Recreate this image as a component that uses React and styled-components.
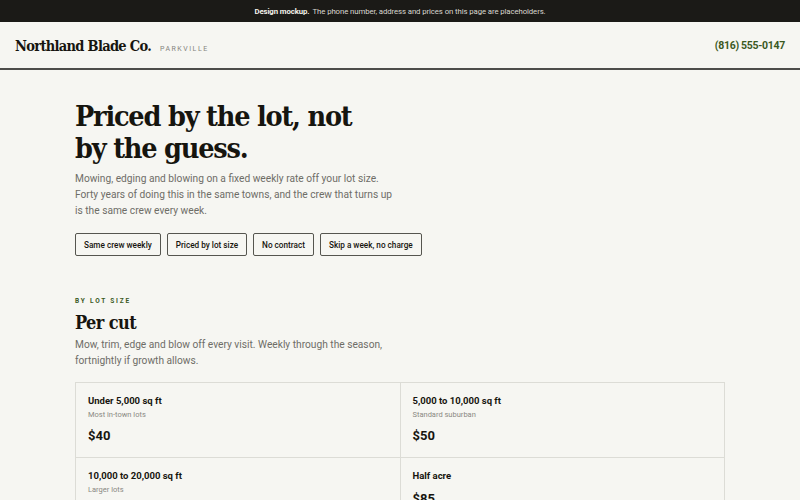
import React from 'react';
import styled, { createGlobalStyle } from 'styled-components';

const INK = '#16150f';
const PAPER = '#f6f6f2';
const MUTED = '#6e6d67';
const GREEN = '#3b5a1f';
const LINE = '#dcdcd6';

const SLAB = '"DejaVu Serif Condensed", "DejaVu Serif", serif';
const SANS = 'Roboto, "Liberation Sans", sans-serif';

const GlobalStyle = createGlobalStyle`
  html, body {
    margin: 0;
    padding: 0;
    background: ${PAPER};
    color: ${INK};
    font-family: ${SANS};
  }
  * {
    box-sizing: border-box;
  }
`;

const Notice = styled.div`
  height: 22px;
  background: #1b1a17;
  color: #d8d6cf;
  font-size: 7.8px;
  letter-spacing: -0.1px;
  display: flex;
  align-items: center;
  justify-content: center;

  strong {
    color: #f3f1ea;
    font-weight: 700;
    margin-right: 3px;
  }
`;

const Header = styled.header`
  height: 48px;
  display: flex;
  align-items: center;
  justify-content: space-between;
  padding: 0 15px;
  border-bottom: 2px solid #4d4d4a;
`;

const Brand = styled.div`
  display: flex;
  align-items: baseline;
  gap: 9px;
`;

const BrandName = styled.span`
  font-family: ${SLAB};
  font-size: 14.5px;
  font-weight: 700;
  letter-spacing: -0.7px;
`;

const Town = styled.span`
  font-size: 7px;
  letter-spacing: 1.5px;
  color: #85847e;
  text-transform: uppercase;
`;

const Phone = styled.a`
  color: ${GREEN};
  font-weight: 700;
  font-size: 10.5px;
  letter-spacing: -0.3px;
  text-decoration: none;
`;

const Main = styled.main`
  padding: 30px 75px 0;
  display: flex;
  flex-direction: column;
`;

const Headline = styled.h1`
  font-family: ${SLAB};
  font-weight: 700;
  font-size: 28.5px;
  line-height: 32px;
  letter-spacing: -1.2px;
  margin: 0;
  max-width: 300px;
`;

const Lead = styled.p`
  margin: ${(p) => p.$top}px 0 0;
  color: ${MUTED};
  font-size: 10.2px;
  line-height: 16px;
  max-width: ${(p) => p.$width}px;
`;

const Tags = styled.ul`
  list-style: none;
  margin: 14px 0 0;
  padding: 0;
  display: flex;
  gap: 6px;
`;

const Tag = styled.li`
  height: 23px;
  padding: 0 8px;
  display: flex;
  align-items: center;
  border: 1px solid #55554f;
  border-radius: 2px;
  font-size: 8.2px;
  font-weight: 500;
`;

const Section = styled.section`
  margin-top: 41px;
`;

const Eyebrow = styled.div`
  color: ${GREEN};
  font-size: 6.5px;
  font-weight: 700;
  letter-spacing: 1.8px;
  text-transform: uppercase;
`;

const SectionTitle = styled.h2`
  font-family: ${SLAB};
  font-weight: 700;
  font-size: 18px;
  line-height: 22px;
  margin: 7px 0 0;
  letter-spacing: -0.6px;
`;

const PriceGrid = styled.div`
  margin-top: 13px;
  display: grid;
  grid-template-columns: 1fr 1fr;
  border-top: 1px solid ${LINE};
  border-left: 1px solid ${LINE};
`;

const Cell = styled.div`
  height: 75px;
  padding: 12px 12px 0;
  border-right: 1px solid ${LINE};
  border-bottom: 1px solid ${LINE};
  display: flex;
  flex-direction: column;
`;

const Size = styled.div`
  font-size: 9.5px;
  font-weight: 700;
  line-height: 12px;
`;

const Note = styled.div`
  margin-top: 3px;
  font-size: 7.5px;
  color: #8a8983;
`;

const Price = styled.div`
  margin-top: 9px;
  font-size: 13px;
  font-weight: 700;
`;

const lots = [
  { size: 'Under 5,000 sq ft', note: 'Most in-town lots', price: '$40' },
  { size: '5,000 to 10,000 sq ft', note: 'Standard suburban', price: '$50' },
  { size: '10,000 to 20,000 sq ft', note: 'Larger lots', price: '$65' },
  { size: 'Half acre', note: '', price: '$85' },
];

const tags = ['Same crew weekly', 'Priced by lot size', 'No contract', 'Skip a week, no charge'];

export default function App() {
  return (
    <>
      <GlobalStyle />
      <Notice>
        <strong>Design mockup.</strong> The phone number, address and prices on this page are placeholders.
      </Notice>
      <Header>
        <Brand>
          <BrandName>Northland Blade Co.</BrandName>
          <Town>Parkville</Town>
        </Brand>
        <Phone href="#">(816) 555-0147</Phone>
      </Header>
      <Main>
        <Headline>Priced by the lot, not by the guess.</Headline>
        <Lead $top={7} $width={318}>
          Mowing, edging and blowing on a fixed weekly rate off your lot size. Forty years of doing this in
          the same towns, and the crew that turns up is the same crew every week.
        </Lead>
        <Tags>
          {tags.map((t) => (
            <Tag key={t}>{t}</Tag>
          ))}
        </Tags>
        <Section>
          <Eyebrow>By lot size</Eyebrow>
          <SectionTitle>Per cut</SectionTitle>
          <Lead $top={3} $width={325}>
            Mow, trim, edge and blow off every visit. Weekly through the season, fortnightly if growth allows.
          </Lead>
          <PriceGrid>
            {lots.map((lot) => (
              <Cell key={lot.size}>
                <Size>{lot.size}</Size>
                {lot.note && <Note>{lot.note}</Note>}
                <Price>{lot.price}</Price>
              </Cell>
            ))}
          </PriceGrid>
        </Section>
      </Main>
    </>
  );
}
